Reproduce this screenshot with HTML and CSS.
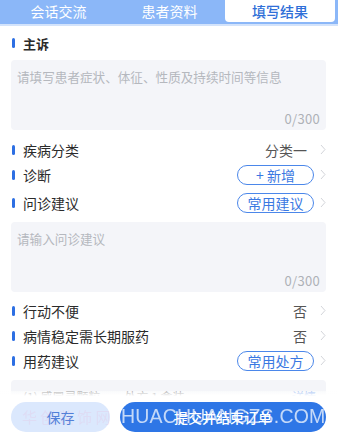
FILE: index.html
```html
<!DOCTYPE html>
<html lang="zh-CN">
<head>
<meta charset="utf-8">
<link rel="stylesheet" href="styles.css">
</head>
<body>
<div class="tabs">
  <div class="tab">会话交流</div>
  <div class="tab">患者资料</div>
  <div class="tab active">填写结果</div>
</div>
<div class="strip"></div>
<main class="content">
  <div class="heading"><span class="bar"></span><span class="label">主诉</span></div>
  <div class="box">
    <div class="ph">请填写患者症状、体征、性质及持续时间等信息</div>
    <div class="count">0/300</div>
  </div>

  <div class="rows first">
    <div class="row">
      <span class="bar"></span><span class="label">疾病分类</span>
      <span class="value">分类一</span>
      <svg class="chev" width="6" height="11" viewBox="0 0 6 11"><polyline points="1,1 5,5.5 1,10" fill="none" stroke="#d3d5da" stroke-width="1"/></svg>
    </div>
    <div class="row">
      <span class="bar"></span><span class="label">诊断</span>
      <span class="pill">+ 新增</span>
      <svg class="chev" width="6" height="11" viewBox="0 0 6 11"><polyline points="1,1 5,5.5 1,10" fill="none" stroke="#d3d5da" stroke-width="1"/></svg>
    </div>
    <div class="row third">
      <span class="bar"></span><span class="label">问诊建议</span>
      <span class="pill">常用建议</span>
      <svg class="chev" width="6" height="11" viewBox="0 0 6 11"><polyline points="1,1 5,5.5 1,10" fill="none" stroke="#d3d5da" stroke-width="1"/></svg>
    </div>
  </div>

  <div class="box">
    <div class="ph">请输入问诊建议</div>
    <div class="count">0/300</div>
  </div>

  <div class="rows second">
    <div class="row">
      <span class="bar"></span><span class="label">行动不便</span>
      <span class="value">否</span>
      <svg class="chev" width="6" height="11" viewBox="0 0 6 11"><polyline points="1,1 5,5.5 1,10" fill="none" stroke="#d3d5da" stroke-width="1"/></svg>
    </div>
    <div class="row">
      <span class="bar"></span><span class="label">病情稳定需长期服药</span>
      <span class="value">否</span>
      <svg class="chev" width="6" height="11" viewBox="0 0 6 11"><polyline points="1,1 5,5.5 1,10" fill="none" stroke="#d3d5da" stroke-width="1"/></svg>
    </div>
    <div class="row">
      <span class="bar"></span><span class="label">用药建议</span>
      <span class="pill">常用处方</span>
      <svg class="chev" width="6" height="11" viewBox="0 0 6 11"><polyline points="1,1 5,5.5 1,10" fill="none" stroke="#d3d5da" stroke-width="1"/></svg>
    </div>
  </div>

  <div class="card">
    <div class="card-line"><span>(1) 感冒灵颗粒　　处方 1 盒装</span><span class="detail">详情</span></div>
    <div class="card-line"><span>每日三次，每次一袋</span></div>
  </div>
</main>

<footer class="footer">
  <button class="btn save">保存</button>
  <button class="btn submit">提交并结束订单</button>
  <div class="wm-cn">华 创 装 饰 网</div>
  <div class="wm">HUACHUANGZS.COM</div>
</footer>
</body>
</html>
```

FILE: styles.css
```css
* { box-sizing: border-box; }
html, body {
  margin: 0;
  padding: 0;
  background: #fff;
  font-family: "Noto Sans CJK SC", "Noto Sans", sans-serif;
  color: #333;
}
body { width: 338px; height: 435px; overflow: hidden; }

.tabs {
  display: flex;
  height: 24px;
  padding: 0 3px 2px 3px;
  background: #8bb7f8;
}
.tab {
  flex: 1;
  display: flex;
  align-items: center;
  justify-content: center;
  color: #fff;
  font-size: 14px;
  font-weight: 400;
  line-height: 1;
}
.tab.active {
  flex: 0 0 110px;
  background: #fff;
  color: #2f6fd8;
  font-weight: 500;
  border-radius: 0 0 4px 4px;
}
.strip { height: 2px; background: #d3e3fb; }

.content { padding: 7px 12px 0 11px; }

.heading {
  display: flex;
  align-items: center;
  height: 20px;
}
.bar {
  width: 3px;
  height: 10px;
  border-radius: 1.5px;
  background: #2d6fe3;
  margin: 0 8px 0 1px;
  flex: none;
}
.label {
  font-size: 14px;
  font-weight: 400;
  color: #2b2b2b;
  line-height: 1;
}
.heading .label { font-size: 13px; font-weight: 600; }

.box {
  margin-top: 7px;
  height: 70px;
  background: #f4f5f9;
  border-radius: 4px;
  padding: 9px 6px 0 6px;
  display: flex;
  flex-direction: column;
}
.ph {
  font-size: 12.6px;
  color: #b5b8be;
  line-height: 16px;
  white-space: nowrap;
}
.count {
  margin-top: auto;
  margin-bottom: 4px;
  text-align: right;
  font-size: 13px;
  letter-spacing: 0.3px;
  color: #aeb1b7;
  line-height: 14px;
}

.rows { display: flex; flex-direction: column; }
.rows.first { margin-top: 7px; margin-bottom: 7px; }
.rows.second { margin-top: 6px; }
.row {
  display: flex;
  align-items: center;
  height: 25px;
}
.row.third { margin-top: 3px; }
.value {
  margin-left: auto;
  font-size: 14px;
  color: #555;
  line-height: 1;
}
.pill {
  margin-left: auto;
  height: 20px;
  width: 77px;
  border: 1px solid #4b87ea;
  border-radius: 10px;
  color: #3a78e2;
  font-size: 14px;
  display: flex;
  align-items: center;
  justify-content: center;
  line-height: 1;
  margin-right: -7px;
}
.chev { margin-left: 13px; flex: none; }

.card {
  margin-top: 7px;
  height: 60px;
  background: #f4f5f9;
  border-radius: 4px;
  padding: 10px 10px 0 12px;
}
.card-line {
  display: flex;
  justify-content: space-between;
  font-size: 12px;
  line-height: 14px;
  color: #666;
  margin-bottom: 6px;
}
.detail { color: #5b8fe8; }

.footer {
  position: fixed;
  left: 0;
  right: 0;
  bottom: 0;
  height: 44px;
  display: flex;
  gap: 10px;
  padding: 11px 12px 3px 11px;
  background: linear-gradient(to bottom, rgba(255,255,255,0.5) 0px, #fff 5px, #fff 100%);
}
.btn {
  height: 30px;
  border: none;
  border-radius: 15px;
  font-family: "Noto Sans CJK SC", "Noto Sans", sans-serif;
  font-size: 14px;
  padding: 0;
  line-height: 1;
}
.save {
  width: 99px;
  background: #dbe8fd;
  color: #4f80d9;
}
.submit {
  flex: 1;
  background: #2e76e6;
  color: #fff;
  font-weight: 500;
}
.wm {
  position: absolute;
  left: 121px;
  top: 10px;
  font-family: "Liberation Sans", sans-serif;
  font-size: 19.5px;
  line-height: 30px;
  color: rgba(255,255,255,0.72);
  letter-spacing: 0.2px;
  pointer-events: none;
}
.wm-cn {
  position: absolute;
  left: 22px;
  top: 11px;
  font-size: 15px;
  line-height: 30px;
  color: rgba(240,150,190,0.14);
  pointer-events: none;
}
```
